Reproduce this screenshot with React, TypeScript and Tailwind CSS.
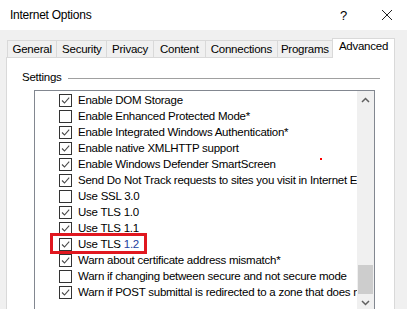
const tabs = [
  { label: "General", w: 51 },
  { label: "Security", w: 51 },
  { label: "Privacy", w: 47 },
  { label: "Content", w: 53 },
  { label: "Connections", w: 73 },
  { label: "Programs", w: 56 },
];

const rows: { label: string; checked: boolean }[] = [
  { label: "Enable DOM Storage", checked: true },
  { label: "Enable Enhanced Protected Mode*", checked: false },
  { label: "Enable Integrated Windows Authentication*", checked: true },
  { label: "Enable native XMLHTTP support", checked: true },
  { label: "Enable Windows Defender SmartScreen", checked: true },
  { label: "Send Do Not Track requests to sites you visit in Internet Explorer", checked: true },
  { label: "Use SSL 3.0", checked: false },
  { label: "Use TLS 1.0", checked: true },
  { label: "Use TLS 1.1", checked: true },
  { label: "Use TLS 1.2", checked: true },
  { label: "Warn about certificate address mismatch*", checked: true },
  { label: "Warn if changing between secure and not secure mode", checked: false },
  { label: "Warn if POST submittal is redirected to a zone that does not permit posts", checked: true },
];

const CheckBox = ({ checked }: { checked: boolean }) => (
  <svg width="13" height="13" viewBox="0 0 13 13" className="shrink-0">
    <rect x="0.5" y="0.5" width="12" height="12" fill="#fff" stroke="#333" />
    {checked && (
      <path d="M3 6.5 L5.5 9 L10.2 3.6" fill="none" stroke="#4a4a4a" strokeWidth="1.1" />
    )}
  </svg>
);

export default function App() {
  return (
    <div className="w-[407px] h-[309px] overflow-hidden bg-white flex flex-col text-[11.5px] tracking-[-0.25px] text-black font-['Liberation_Sans',Arial,sans-serif] leading-none">
      {/* title bar */}
      <div className="h-[30px] shrink-0 flex items-center pl-[10px]">
        <span className="text-[12px]">Internet Options</span>
        <span className="ml-auto mr-[34px] text-[13px]">?</span>
        <svg width="12" height="12" viewBox="0 0 12 12" className="mr-[14px]">
          <path d="M1 1 L11 11 M11 1 L1 11" stroke="#222" strokeWidth="1" />
        </svg>
      </div>

      <div className="flex-1 bg-[#f0f0f0] pl-[6px] pr-[12px] pt-[7px]">
        {/* tabs */}
        <div className="flex items-end h-[20px] pl-[1px]">
          {tabs.map((t, i) => (
            <div
              key={t.label}
              style={{ width: t.w }}
              className={`h-[17px] flex items-center justify-center pt-[1px] border-t border-r border-[#d9d9d9] bg-[#f0f0f0] ${i === 0 ? "border-l" : ""}`}
            >
              {t.label}
            </div>
          ))}
          <div className="relative top-px z-10 -ml-px w-[64px] h-[20px] flex items-center justify-center pb-[3px] bg-white border-t border-l border-r border-[#d9d9d9]">
            Advanced
          </div>
        </div>

        {/* panel */}
        <div className="bg-white border border-[#d9d9d9] h-[260px]">
          <div className="mt-[13px] h-[14px] flex items-center pl-[15px] pr-[14px]">
            <span>Settings</span>
            <div className="flex-1 ml-[6px] h-px bg-[#a0a0a0]" />
          </div>

          <div className="relative mt-[5px] ml-[27px] mr-[19px] h-[222px] border border-[#828790] flex">
            <div className="flex-1 overflow-hidden pt-[1px]">
              {rows.map((r) => (
                <div key={r.label} className="h-[16px] flex items-center pl-[24px] whitespace-nowrap">
                  <CheckBox checked={r.checked} />
                  <span className="ml-[6px] pt-[1px]">
                    {r.label === "Use TLS 1.2" ? (
                      <>
                        Use TLS <span className="text-[#2340a0]">1.2</span>
                      </>
                    ) : (
                      r.label
                    )}
                  </span>
                </div>
              ))}
            </div>

            {/* scrollbar */}
            <div className="w-[17px] shrink-0 bg-[#f0f0f0] flex flex-col">
              <div className="h-[17px] flex items-center justify-center">
                <svg width="9" height="6" viewBox="0 0 9 6">
                  <path d="M1 5 L4.5 1.5 L8 5" fill="none" stroke="#606060" strokeWidth="1.5" />
                </svg>
              </div>
              <div className="flex-1" />
              <div className="h-[29px] mx-[1px] bg-[#cdcdcd]" />
              <div className="h-[17px] flex items-center justify-center">
                <svg width="9" height="6" viewBox="0 0 9 6">
                  <path d="M1 1 L4.5 4.5 L8 1" fill="none" stroke="#606060" strokeWidth="1.5" />
                </svg>
              </div>
            </div>

            {/* highlight */}
            <div className="absolute left-[15px] top-[142px] w-[97px] h-[21px] border-[3px] border-[#e0171f]" />
            <div className="absolute left-[285px] top-[67px] w-[2px] h-[2px] bg-[#ff0000]" />
          </div>
        </div>
      </div>
    </div>
  );
}
